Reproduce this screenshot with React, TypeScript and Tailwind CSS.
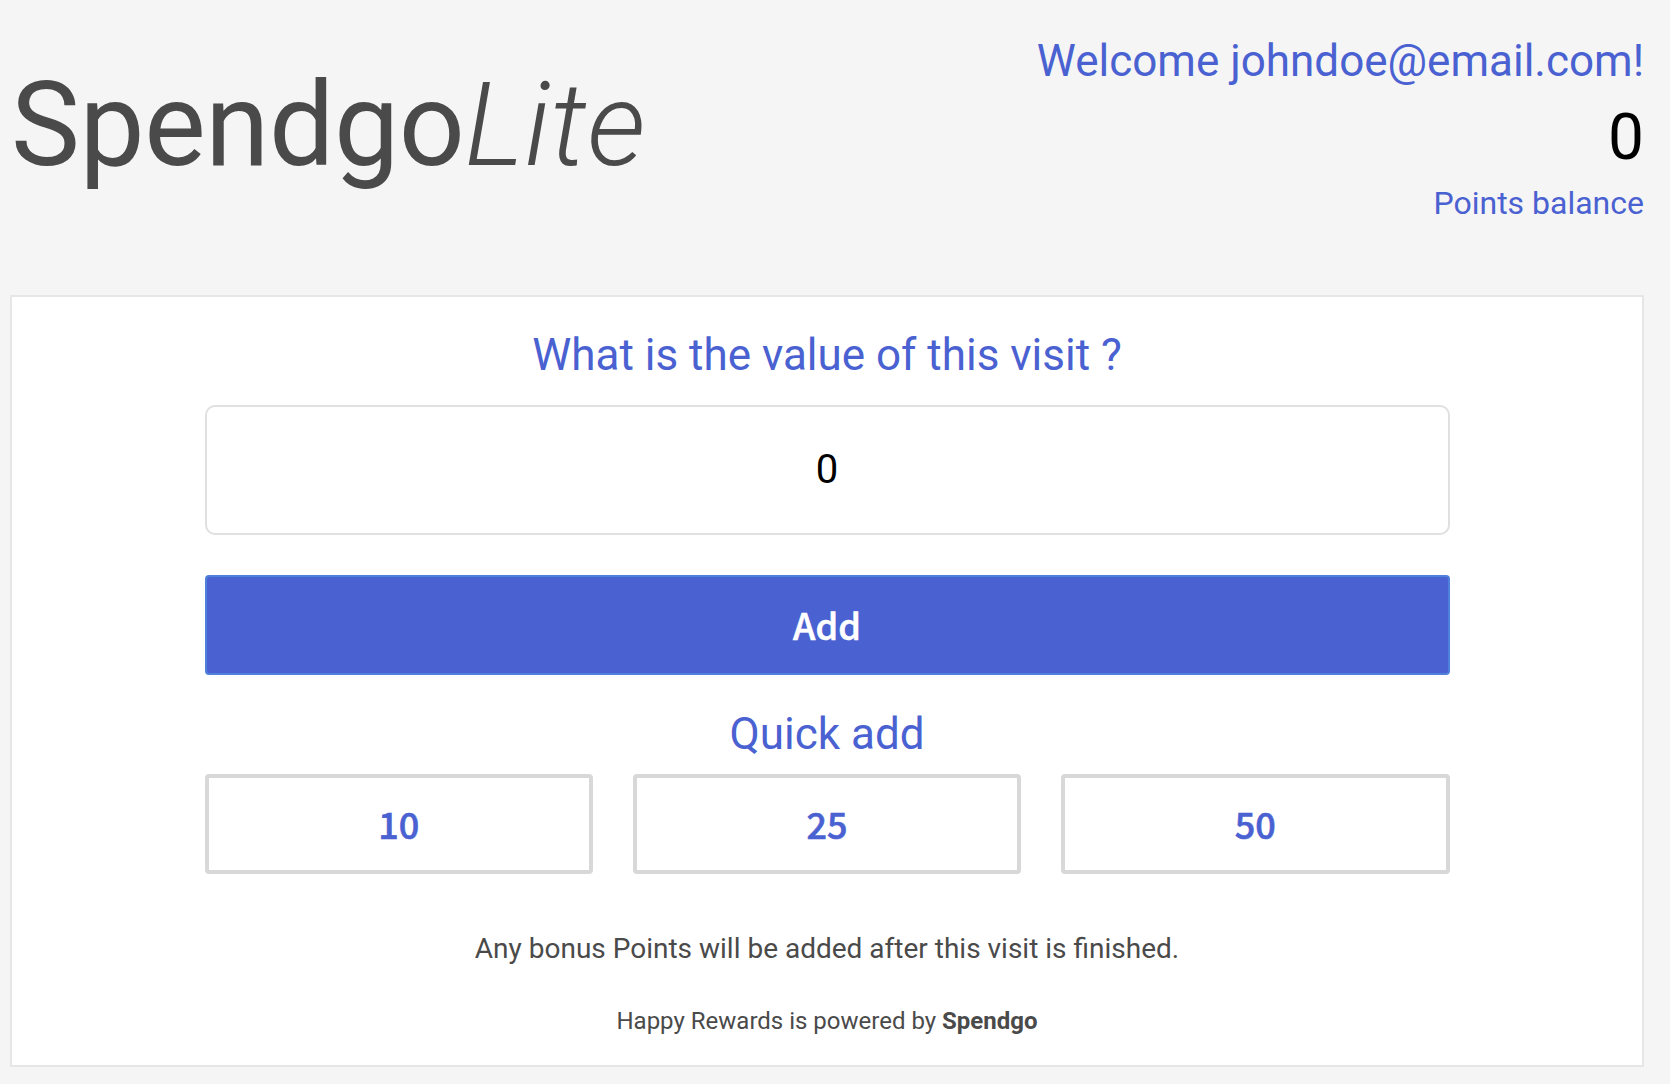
export default function App() {
  return (
    <div className="min-h-[1084px] bg-[#f5f5f5] font-['Roboto',sans-serif]">
      <header className="flex h-[295px] items-start justify-between pl-[11px] pr-[26px]">
        <div className="mt-[55px] text-[116px] leading-[140px] tracking-[-0.4px] text-[#4a4a4a] blur-[0.5px]">
          Spendgo<span className="font-light italic tracking-[0.6px]">Lite</span>
        </div>
        <div className="flex flex-col items-end text-right">
          <div className="mt-[36px] text-[44px] leading-[50px] text-[#4a61d1]">
            Welcome johndoe@email.com!
          </div>
          <div className="mt-[17px] text-[64px] leading-[70px] text-black">0</div>
          <div className="mt-[10px] text-[32px] leading-[40px] text-[#4a61d1]">Points balance</div>
        </div>
      </header>

      <main className="ml-[10px] mr-[26px] flex h-[772px] flex-col items-center border-2 border-[#e6e6e6] bg-white">
        <h2 className="mt-[32px] text-[44px] leading-[52px] text-[#4a61d1]">What is the value of this visit ?</h2>
        <div className="mt-[24px] flex w-[1245px] flex-col">
          <div className="flex h-[130px] items-center justify-center rounded-[10px] border-2 border-[#e0e0e0] text-[40px] text-black">
            0
          </div>
          <button className="mt-[40px] h-[100px] rounded-[4px] border-2 border-[#4f80dc] bg-[#4a61d1] pb-[2px] font-['Noto_Sans_CJK_SC',sans-serif] text-[36px] font-medium text-white [-webkit-text-stroke:0.6px_#ffffff]">
            Add
          </button>
          <div className="mt-[33px] text-center text-[44px] leading-[52px] text-[#4a61d1]">Quick add</div>
          <div className="mt-[14px] grid grid-cols-3 gap-[40px]">
            {["10", "25", "50"].map((v) => (
              <button
                key={v}
                className="h-[100px] rounded-[4px] border-4 border-[#d8d8d8] bg-white pb-[2px] font-['Noto_Sans_CJK_SC',sans-serif] text-[36px] font-medium text-[#4a61d1] [-webkit-text-stroke:0.6px_#4a61d1]"
              >
                {v}
              </button>
            ))}
          </div>
        </div>
        <p className="mt-[57px] text-[28px] leading-[36px] text-[#4a4a4a]">Any bonus Points will be added after this visit is finished.</p>
        <p className="mt-[38px] text-[24px] leading-[32px] text-[#4a4a4a]">
          Happy Rewards is powered by <b>Spendgo</b>
        </p>
      </main>
    </div>
  );
}
